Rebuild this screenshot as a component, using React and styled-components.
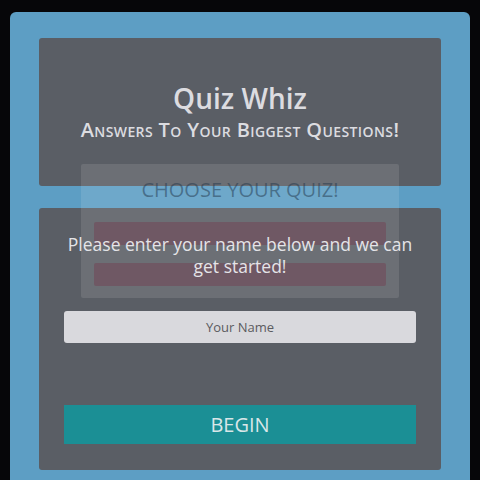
import React from "react"
import styled, { createGlobalStyle } from "styled-components"

const GlobalStyle = createGlobalStyle`
  html, body {
    margin: 0;
    padding: 0;
    background-color: #060609;
  }
  body {
    font-family: "Open Sans", "Noto Sans", sans-serif;
  }
`

const StyledPage = styled.div`
  height: 480px;
  overflow: hidden;
  padding: 12px 10px 0;
  box-sizing: border-box;
`

const StyledFrame = styled.div`
  position: relative;
  background-color: #5d9ec4;
  border-radius: 6px 6px 0 0;
  padding: 26px 29px 12px;
  display: flex;
  flex-direction: column;
  gap: 22px;
`

const StyledPanel = styled.div`
  background-color: #5a5e65;
  border-radius: 3px;
  height: ${(props) => props.height}px;
  box-sizing: border-box;
  display: flex;
  flex-direction: column;
`

const StyledHeader = styled(StyledPanel)`
  justify-content: center;
  align-items: center;
  padding-top: 2px;
  color: #dcdce0;
`

const StyledTitle = styled.h1`
  margin: 0;
  font-size: 28px;
  font-weight: 600;
  line-height: 34px;
`

const StyledSubtitle = styled.h2`
  margin: 0;
  font-size: 20px;
  font-weight: 600;
  font-variant: small-caps;
  line-height: 30px;
  letter-spacing: 0.4px;
`

const StyledChooseCard = styled.div`
  position: absolute;
  left: 71px;
  top: 152px;
  width: 318px;
  height: 134px;
  background-color: rgba(255, 255, 255, 0.11);
  border-radius: 2px;
  box-sizing: border-box;
  padding: 12px 13px 0;
  display: flex;
  flex-direction: column;
  gap: 18px;
  z-index: 1;
`

const StyledChooseTitle = styled.div`
  text-align: center;
  font-size: 20px;
  line-height: 28px;
  color: rgba(35, 55, 75, 0.5);
  text-transform: uppercase;
`

const StyledQuizButton = styled.div`
  height: 23px;
  border-radius: 2px;
  background-color: rgba(120, 15, 45, 0.24);
`

const StyledModal = styled(StyledPanel)`
  padding: 25px 25px 0;
  align-items: stretch;
`

const StyledModalContent = styled.div`
  position: relative;
  z-index: 2;
  display: flex;
  flex-direction: column;
`

const StyledPrompt = styled.p`
  margin: 0 0 34px;
  text-align: center;
  color: #e4e4e8;
  font-size: 17.5px;
  line-height: 22px;
`

const StyledInput = styled.input`
  height: 30px;
  border: none;
  border-radius: 3px;
  background-color: #d9d9dd;
  text-align: center;
  font-family: inherit;
  font-size: 13px;
  color: #333;
  outline: none;
  &::placeholder {
    color: #5b5b60;
  }
`

const StyledBeginButton = styled.button`
  margin-top: 62px;
  height: 39px;
  border: none;
  background-color: #1b8f95;
  color: #d9e6e8;
  font-family: inherit;
  font-size: 20px;
  cursor: pointer;
  &:hover {
    background-color: #167a7f;
  }
`

export default function App() {
  return (
    <>
      <GlobalStyle />
      <StyledPage>
        <StyledFrame>
          <StyledHeader height={148}>
            <StyledTitle>Quiz Whiz</StyledTitle>
            <StyledSubtitle>Answers To Your Biggest Questions!</StyledSubtitle>
          </StyledHeader>

          <StyledChooseCard>
            <StyledChooseTitle>Choose your quiz!</StyledChooseTitle>
            <StyledQuizButton />
            <StyledQuizButton />
          </StyledChooseCard>

          <StyledModal height={262}>
            <StyledModalContent>
              <StyledPrompt>
                Please enter your name below and we can get started!
              </StyledPrompt>
              <StyledInput placeholder="Your Name" />
              <StyledBeginButton>BEGIN</StyledBeginButton>
            </StyledModalContent>
          </StyledModal>
        </StyledFrame>
      </StyledPage>
    </>
  )
}
